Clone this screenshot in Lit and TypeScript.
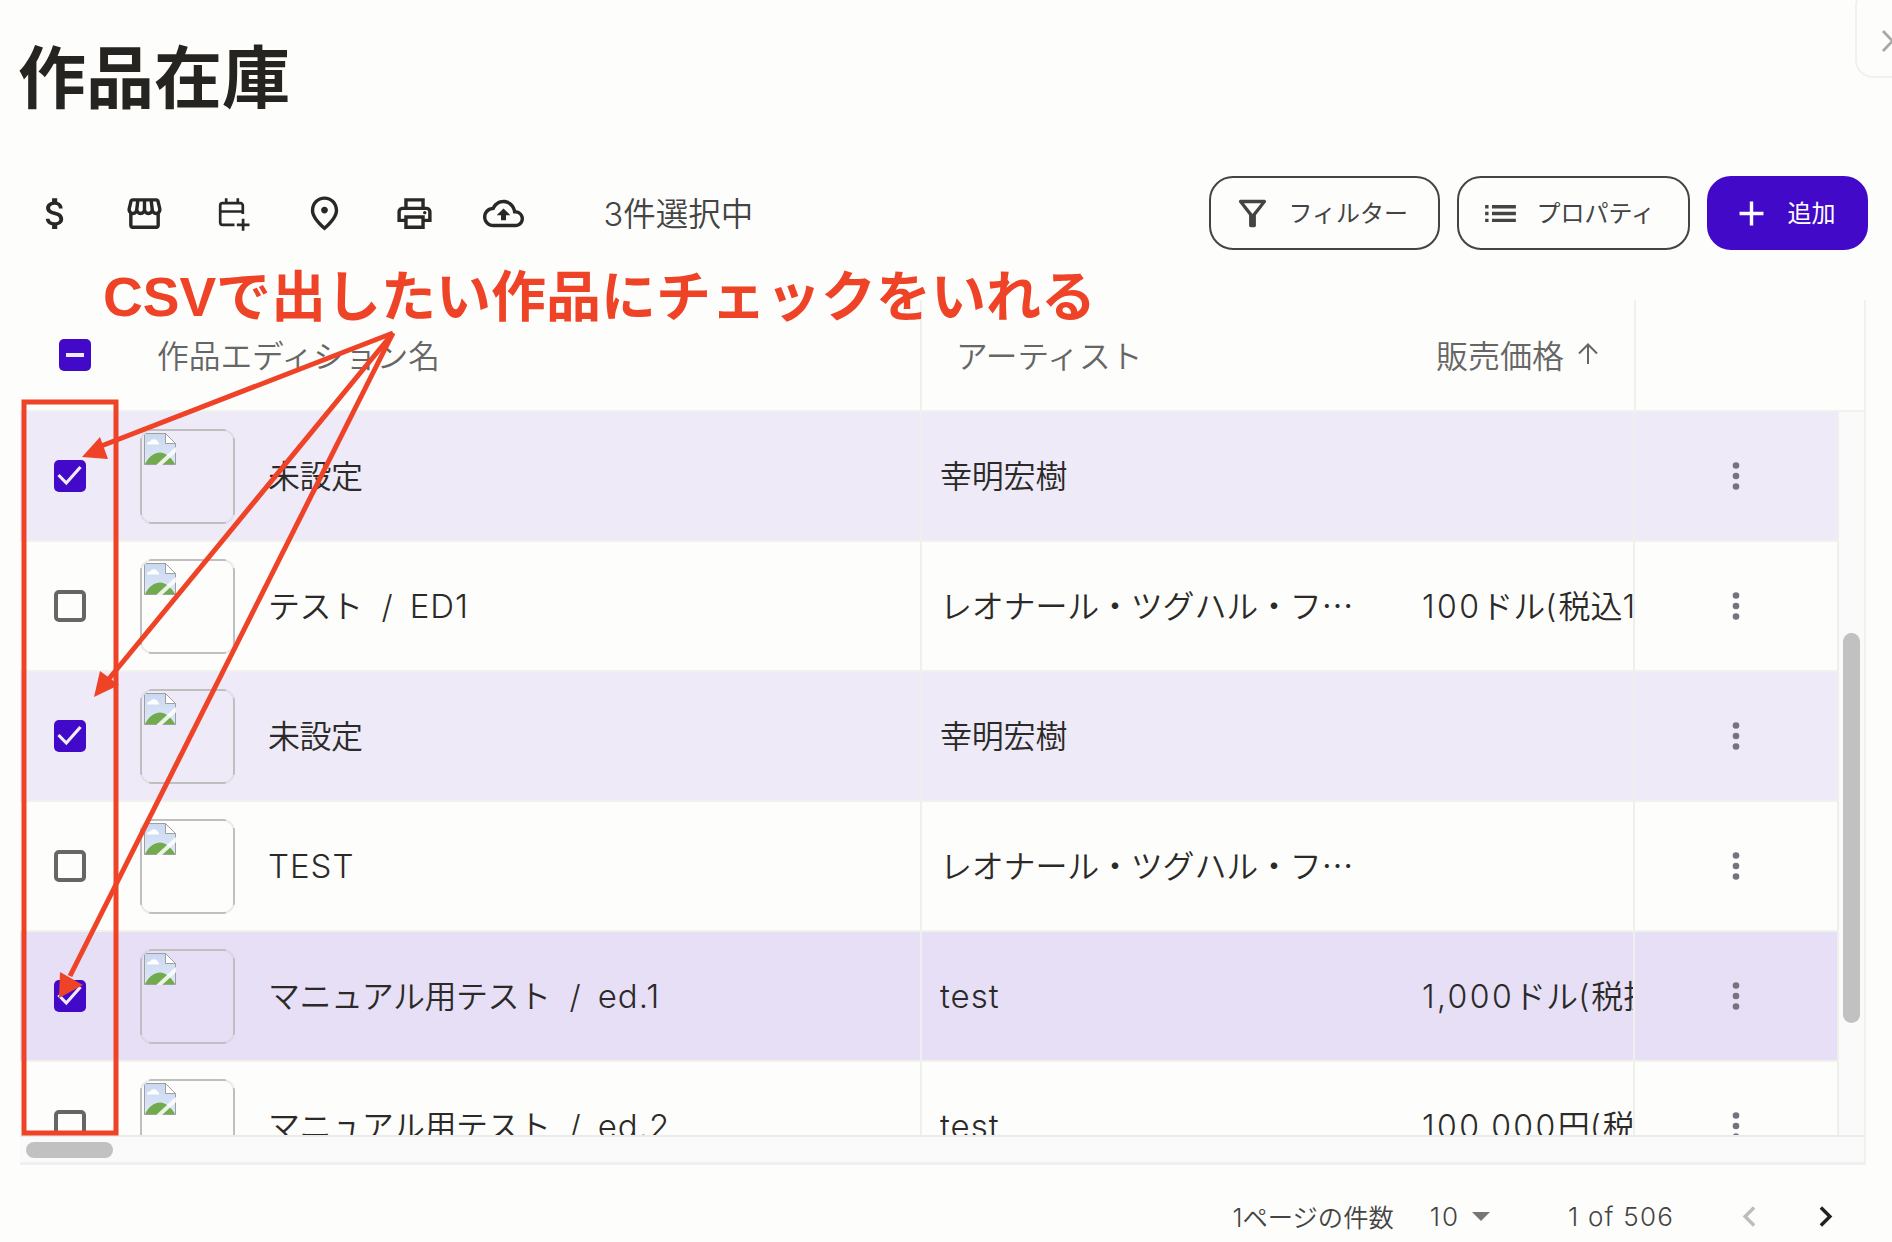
import { LitElement, html, css, svg } from "lit";
import { customElement } from "lit/decorators.js";

const icon = (d: string, size = 41) => html`<svg class="ic" width=${size} height=${size} viewBox="0 0 24 24" fill="currentColor"><path d=${d}></path></svg>`;

const P = {
  dollar: "M11.8 10.9c-2.27-.59-3-1.2-3-2.15 0-1.09 1.01-1.85 2.7-1.85 1.78 0 2.44.85 2.5 2.1h2.21c-.07-1.72-1.12-3.3-3.21-3.81V3h-3v2.16c-1.94.42-3.5 1.68-3.5 3.61 0 2.31 1.91 3.46 4.7 4.13 2.5.6 3 1.48 3 2.41 0 .69-.49 1.79-2.7 1.79-2.06 0-2.87-.92-2.98-2.1h-2.2c.12 2.19 1.76 3.42 3.68 3.83V21h3v-2.15c1.95-.37 3.5-1.5 3.5-3.55 0-2.84-2.43-3.81-4.7-4.4z",
  store: "M21.9 8.89l-1.05-4.37c-.22-.9-1-1.52-1.91-1.52H5.05c-.9 0-1.69.63-1.9 1.52L2.1 8.89c-.24 1.02-.02 2.06.62 2.88.08.11.19.19.28.29V19c0 1.1.9 2 2 2h14c1.1 0 2-.9 2-2v-6.94c.09-.09.2-.18.28-.28.64-.82.87-1.87.62-2.89zm-2.99-3.9l1.05 4.37c.1.42.01.84-.25 1.17-.14.18-.44.47-.94.47-.61 0-1.14-.49-1.21-1.14L16.98 5l1.93-.01zM13 5h1.96l.54 4.52c.05.39-.07.78-.33 1.07-.22.26-.54.41-.95.41-.67 0-1.22-.59-1.22-1.31V5zM8.49 9.52L9.04 5H11v4.69c0 .72-.55 1.31-1.29 1.31-.34 0-.65-.15-.89-.41-.25-.29-.37-.68-.33-1.07zm-4.45-.16L5.05 5h1.97l-.58 4.86c-.08.65-.6 1.14-1.21 1.14-.49 0-.8-.29-.93-.47-.27-.32-.36-.75-.26-1.17zM5 19v-6.03c.08.01.15.03.23.03.87 0 1.66-.36 2.24-.95.6.6 1.4.95 2.31.95.87 0 1.65-.36 2.23-.93.59.57 1.39.93 2.29.93.84 0 1.64-.35 2.24-.95.58.59 1.37.95 2.24.95.08 0 .15-.02.23-.03V19H5z",
  pin: "M12 12c-1.1 0-2-.9-2-2s.9-2 2-2 2 .9 2 2-.9 2-2 2zm6-1.8C18 6.57 15.35 4 12 4s-6 2.57-6 6.2c0 2.34 1.95 5.44 6 9.14 4.05-3.7 6-6.8 6-9.14zM12 2c4.2 0 8 3.22 8 8.2 0 3.32-2.67 7.25-8 11.8-5.33-4.55-8-8.48-8-11.8C4 5.22 7.8 2 12 2z",
  print: "M19 8h-1V3H6v5H5c-1.66 0-3 1.34-3 3v6h4v4h12v-4h4v-6c0-1.66-1.34-3-3-3zM8 5h8v3H8V5zm8 12v2H8v-4h8v2zm2-2v-2H6v2H4v-4c0-.55.45-1 1-1h14c.55 0 1 .45 1 1v4h-2z M18 10.5a1 1 0 1 1 0 2a1 1 0 1 1 0-2z",
  cloud: "M19.35 10.04C18.67 6.59 15.64 4 12 4 9.11 4 6.6 5.64 5.35 8.04 2.34 8.36 0 10.91 0 14c0 3.31 2.69 6 6 6h13c2.76 0 5-2.24 5-5 0-2.64-2.05-4.78-4.65-4.96zM19 18H6c-2.21 0-4-1.79-4-4 0-2.05 1.53-3.76 3.56-3.97l1.07-.11.5-.95C8.08 7.14 9.94 6 12 6c2.62 0 4.88 1.86 5.39 4.43l.3 1.5 1.53.11c1.56.1 2.78 1.41 2.78 2.96 0 1.65-1.35 3-3 3z M8 13h2.55v3h2.9v-3H16l-4-4z",
  filter: "M7 6h10l-5.01 6.3L7 6zm-2.75-.39C6.27 8.2 10 13 10 13v6c0 .55.45 1 1 1h2c.55 0 1-.45 1-1v-6s3.72-4.8 5.74-7.39c.51-.66.04-1.61-.79-1.61H5.04c-.83 0-1.3.95-.79 1.61z",
  list: "M3 13h2v-2H3v2zm0 4h2v-2H3v2zm0-8h2V7H3v2zm4 4h14v-2H7v2zm0 4h14v-2H7v2zM7 7v2h14V7H7z",
  add: "M19 13h-6v6h-2v-6H5v-2h6V5h2v6h6v2z",
  left: "M15.41 7.41L14 6l-6 6 6 6 1.41-1.41L10.83 12z",
  right: "M10 6L8.59 7.41 13.17 12l-4.58 4.59L10 18l6-6z",
};

const calendarAdd = html`<svg class="ic" width="41" height="41" viewBox="0 0 41 41" fill="none" stroke="currentColor" stroke-width="2.7">
  <path d="M20.5 31.8H8.5a2.3 2.3 0 0 1-2.3-2.3V12.5a2.3 2.3 0 0 1 2.3-2.3H26.5a2.3 2.3 0 0 1 2.3 2.3V21M6.2 18.5H28.8M12.2 5.2V10M23.8 5.2V10M22.8 31.8H35.5M29.1 25.8V37.8"></path></svg>`;

const brokenImage = html`<svg class="broken" width="32" height="32" viewBox="0 0 32 32">
  <defs><linearGradient id="sky" x1="0" y1="0" x2="0" y2="1"><stop offset="0" stop-color="#c9d8f1"></stop><stop offset="1" stop-color="#dfe8f8"></stop></linearGradient></defs>
  <path d="M.5.5H21.5L31.5 10.5V31.5H.5Z" fill="url(#sky)" stroke="#9f9f9f"></path>
  <path d="M3 11.5a3 3 0 0 1 3-3a4.5 4.5 0 0 1 8 .5a2.2 2.2 0 0 1 1 2.5Z" fill="#fff"></path>
  <path d="M1 31C5 23 11 19.5 16 19.5S27 24 31 31Z" fill="#72ab4e"></path>
  <path d="M21.5.5V10.5H31.5Z" fill="#fff" stroke="#9f9f9f"></path>
  <path d="M14 33L33 15.5" stroke="#fff" stroke-opacity=".85" stroke-width="4"></path>
</svg>`;

const checkTick = html`<svg class="ic" width="32" height="32" viewBox="0 0 32 32" fill="none"><path d="M4.5 15L12.3 23L26.5 7" stroke="#f1edfb" stroke-width="3.2"></path></svg>`;

const kebab = html`<svg class="kebab" width="12" height="32" viewBox="0 0 12 32"><circle cx="6" cy="5.5" r="3.3"></circle><circle cx="6" cy="16" r="3.3"></circle><circle cx="6" cy="26.5" r="3.3"></circle></svg>`;

const ARTIST = "レオナール・ツグハル・フジタ";
type Row = { kana: string; ed?: string; artist: string; num?: string; unit?: string; tax?: string; state: string; check: boolean };
const ROWS: Row[] = [
  { kana: "未設定", artist: "幸明宏樹", state: "sel", check: true },
  { kana: "テスト", ed: "ED1", artist: ARTIST, num: "100", unit: "ドル", tax: "税込110ドル)", state: "", check: false },
  { kana: "未設定", artist: "幸明宏樹", state: "sel", check: true },
  { kana: "", ed: "TEST", artist: ARTIST, state: "", check: false },
  { kana: "マニュアル用テスト", ed: "ed.1", artist: "test", num: "1,000", unit: "ドル", tax: "税抜)", state: "hov", check: true },
  { kana: "マニュアル用テスト", ed: "ed.2", artist: "test", num: "100,000", unit: "円", tax: "税込)", state: "", check: false },
];

@customElement("app-root")
export class AppRoot extends LitElement {
  static styles = css`
    :host { display: block; position: relative; width: 1892px; height: 1242px; overflow: hidden; background: #fdfdfb;
      font-family: Inter, "Noto Sans CJK JP", "Noto Sans", sans-serif; color: #2c2a28; }
    .main { padding: 0 24px 0 20px; display: flex; flex-direction: column; }
    .ic { display: block; flex: none; }
    h1 { box-sizing: border-box; margin: 0 0 22px -2px; height: 154px; padding-top: 2px; display: flex; align-items: center; font-size: 68px; font-weight: 700; color: #262420; line-height: 1; }

    .toolbar { display: flex; align-items: center; height: 74px; }
    .tools { display: flex; gap: 48.8px; padding-left: 14.5px; color: #2a2825; }
    .count { margin-left: 79px; padding-bottom: 4px; font-size: 32.5px; color: #444; font-weight: 350; }
    .actions { margin-left: auto; display: flex; gap: 17px; }
    .btn { box-sizing: border-box; height: 74px; border-radius: 24px; border: 2px solid #444; display: flex; align-items: center; gap: 16px;
      padding-left: 20.5px; font-size: 24px; color: #444; white-space: nowrap; }
    .btn span { padding-bottom: 4px; }
    .btn.filter { width: 231px; }
    .btn.props { width: 233px; }
    .btn.add { width: 161px; padding-left: 21.5px; background: #4209c8; border-color: #4209c8; color: #fff; }

    .table { margin: 50px 2px 0 0; display: flex; flex-direction: column; border-right: 2px solid #f1f1ef; }
    .head { display: grid; grid-template-columns: 137px 763px 516px 198px 1fr; height: 110px; align-items: center; font-size: 31.7px; color: #666; font-weight: 350; }
    .head .box { margin-left: 39px; }
    .head .h-name { padding-bottom: 3px; }
    .head .h-artist { padding: 0 0 3px 34px; border-left: 2px solid #f0f0ee; height: 100%; display: flex; align-items: center; box-sizing: border-box; }
    .head .h-price { display: flex; align-items: center; gap: 12px; height: 100%; font-size: 32px; padding-bottom: 3px; box-sizing: border-box; }
    .head .h-end { border-left: 2px solid #f0f0ee; height: 100%; box-sizing: border-box; }

    .body { display: flex; height: 725px; }
    .rows { width: 1817px; overflow: hidden; flex: none; }
    .row { box-sizing: border-box; height: 130px; display: grid; grid-template-columns: 100px 148px 652px 502px 211px 1fr; align-items: center;
      border-top: 2px solid #f1f1ee; font-size: 32px; font-weight: 350; }
    .row.sel { background: #eeeaf8; }
    .row.hov { background: #e6dff6; }
    .box { box-sizing: border-box; width: 32px; height: 32px; border-radius: 5px; display: block; }
    .box.on { background: #4209c8; }
    .box.off { border: 4px solid #666; }
    .box.mixed { background: #4209c8; display: flex; align-items: center; justify-content: center; }
    .box.mixed i { display: block; width: 18px; height: 4px; background: #efeafa; }
    .c-check { display: flex; justify-content: center; }
    .c-thumb { padding-left: 20px; }
    .thumb { box-sizing: border-box; width: 95px; height: 95px; border-radius: 12px; border: 2px solid rgba(192, 192, 192, .28); padding: 2px; overflow: hidden;
      background:
        linear-gradient(#c0c0c0, #c0c0c0) center top / calc(100% - 18px) 2px no-repeat border-box,
        linear-gradient(#c0c0c0, #c0c0c0) center bottom / calc(100% - 18px) 2px no-repeat border-box,
        linear-gradient(#c0c0c0, #c0c0c0) left center / 2px calc(100% - 18px) no-repeat border-box,
        linear-gradient(#c0c0c0, #c0c0c0) right center / 2px calc(100% - 18px) no-repeat border-box; }
    .broken { display: block; }
    .c-name { display: flex; align-items: baseline; white-space: nowrap; padding-bottom: 5px; }
    .c-name.only { padding-bottom: 1px; }
    .kana { letter-spacing: -0.5px; }
    .sep { margin: 0 17px 0 19px; }
    .lat { font-size: 33px; letter-spacing: 1px; }
    .c-artist { align-self: stretch; display: flex; align-items: center; border-left: 2px solid #efefec; padding: 0 0 4px 18px; overflow: hidden; }
    .c-artist.latin { padding-bottom: 1px; letter-spacing: 1px; font-size: 33px; }
    .c-artist span { width: 420px; white-space: nowrap; overflow: hidden; text-overflow: ellipsis; letter-spacing: -0.2px; font-family: "Noto Sans CJK JP", sans-serif; }
    .c-artist.latin span { font-family: Inter, sans-serif; letter-spacing: 1px; }
    .c-price { white-space: nowrap; overflow: hidden; align-self: stretch; display: flex; align-items: center; padding-bottom: 4px; }
    .num { letter-spacing: 2.4px; }
    .par { padding-right: 2px; }
    .c-more { align-self: stretch; border-left: 2px solid #efefec; display: flex; align-items: center; padding-left: 95px; }
    .kebab { fill: #76727e; display: block; }

    .vtrack { flex: 1; box-sizing: border-box; background: #fafafa; border-top: 2px solid #f1f1ee; border-left: 2px solid #efefec; padding: 221px 0 0 4px; }
    .vthumb { width: 17px; height: 390px; border-radius: 8.5px; background: #c1c1c1; }
    .htrack { box-sizing: border-box; height: 30px; background: #fafafa; border-top: 2px solid #ebebeb; border-bottom: 3px solid #f0f0f0; padding: 5px 0 0 6px; }
    .hthumb { width: 87px; height: 16px; border-radius: 8px; background: #c1c1c1; }

    .pager { margin-top: 25px; height: 52px; display: flex; align-items: center; justify-content: flex-end; padding-right: 22.5px; font-size: 25.3px; color: #444; font-weight: 350; }
    .pn { margin-left: 36px; font-size: 26px; letter-spacing: 2px; }
    .tri { margin-left: 12px; display: block; }
    .of { margin-left: 78px; font-size: 26px; letter-spacing: 1.2px; }
    .prev { margin-left: 55px; color: #bdbdbd; }
    .next { margin-left: 34.5px; color: #222; }

    .close { position: absolute; left: 1855px; top: -12px; width: 80px; height: 90px; box-sizing: border-box; border: 2px solid #f1f1ef; border-radius: 18px; }
    .close svg { position: absolute; left: 24px; top: 40px; display: block; }
    .note { position: absolute; left: 103px; top: 262px; font-family: "Liberation Sans", "Noto Sans CJK JP", sans-serif; font-size: 55px; line-height: 70px; font-weight: 700; color: #ee4327; white-space: nowrap; }
    .marks { position: absolute; left: 0; top: 0; display: block; pointer-events: none; }
  `;

  private renderName(r: Row) {
    if (!r.kana) return html`<div class="c-name only"><span class="lat">${r.ed}</span></div>`;
    if (!r.ed) return html`<div class="c-name"><span class="kana">${r.kana}</span></div>`;
    return html`<div class="c-name"><span class="kana">${r.kana}</span><span class="sep">/</span><span class="lat">${r.ed}</span></div>`;
  }

  private renderRow(r: Row) {
    return html`<div class="row ${r.state}">
      <div class="c-check">${r.check ? html`<span class="box on">${checkTick}</span>` : html`<span class="box off"></span>`}</div>
      <div class="c-thumb"><div class="thumb">${brokenImage}</div></div>
      ${this.renderName(r)}
      <div class="c-artist ${r.artist === "test" ? "latin" : ""}"><span>${r.artist}</span></div>
      <div class="c-price">${r.num ? html`<span><span class="num">${r.num}</span>${r.unit}<span class="par">(</span>${r.tax}</span>` : ""}</div>
      <div class="c-more">${kebab}</div>
    </div>`;
  }

  render() {
    return html`
      <div class="main">
        <h1>作品在庫</h1>
        <div class="toolbar">
          <div class="tools">${icon(P.dollar)}${icon(P.store)}${calendarAdd}${icon(P.pin)}${icon(P.print)}${icon(P.cloud)}</div>
          <div class="count">3件選択中</div>
          <div class="actions">
            <div class="btn filter">${icon(P.filter)}<span>フィルター</span></div>
            <div class="btn props">${icon(P.list)}<span>プロパティ</span></div>
            <div class="btn add">${icon(P.add)}<span>追加</span></div>
          </div>
        </div>
        <div class="table">
          <div class="head">
            <div><span class="box mixed"><i></i></span></div>
            <div class="h-name">作品エディション名</div>
            <div class="h-artist">アーティスト</div>
            <div class="h-price">販売価格
              <svg class="ic" width="24" height="24" viewBox="0 0 24 24" fill="none" stroke="#666" stroke-width="2"><path d="M12 22V3M3 11.5L12 2.5L21 11.5"></path></svg>
            </div>
            <div class="h-end"></div>
          </div>
          <div class="body">
            <div class="rows">${ROWS.map((r) => this.renderRow(r))}</div>
            <div class="vtrack"><div class="vthumb"></div></div>
          </div>
          <div class="htrack"><div class="hthumb"></div></div>
        </div>
        <div class="pager">
          <span>1ページの件数</span>
          <span class="pn">10</span>
          <svg class="tri" width="18" height="9" viewBox="0 0 18 9"><path d="M0 0H18L9 9Z" fill="#777"></path></svg>
          <span class="of">1 of 506</span>
          <span class="prev">${icon(P.left)}</span>
          <span class="next">${icon(P.right)}</span>
        </div>
      </div>

      <div class="close"><svg width="22" height="22" viewBox="0 0 22 22" fill="none" stroke="#a8a8a4" stroke-width="2.8"><path d="M2 1L21 21M21 1L2 21"></path></svg></div>
      <div class="note">CSVで出したい作品にチェックをいれる</div>
      <svg class="marks" width="1892" height="1242" viewBox="0 0 1892 1242" fill="none">
        ${svg`
          <rect x="24" y="402" width="92" height="731" stroke="#ee4327" stroke-width="5"></rect>
          <path d="M393 333L96 448" stroke="#ee4327" stroke-width="5"></path>
          <path d="M82 457L100 437L108 459Z" fill="#ee4327"></path>
          <path d="M393 333L108 680" stroke="#ee4327" stroke-width="5"></path>
          <path d="M94 697L100 671L119 685Z" fill="#ee4327"></path>
          <path d="M393 333L70 976" stroke="#ee4327" stroke-width="5"></path>
          <path d="M59 998L60 972L83 985Z" fill="#ee4327"></path>
        `}
      </svg>
    `;
  }
}
